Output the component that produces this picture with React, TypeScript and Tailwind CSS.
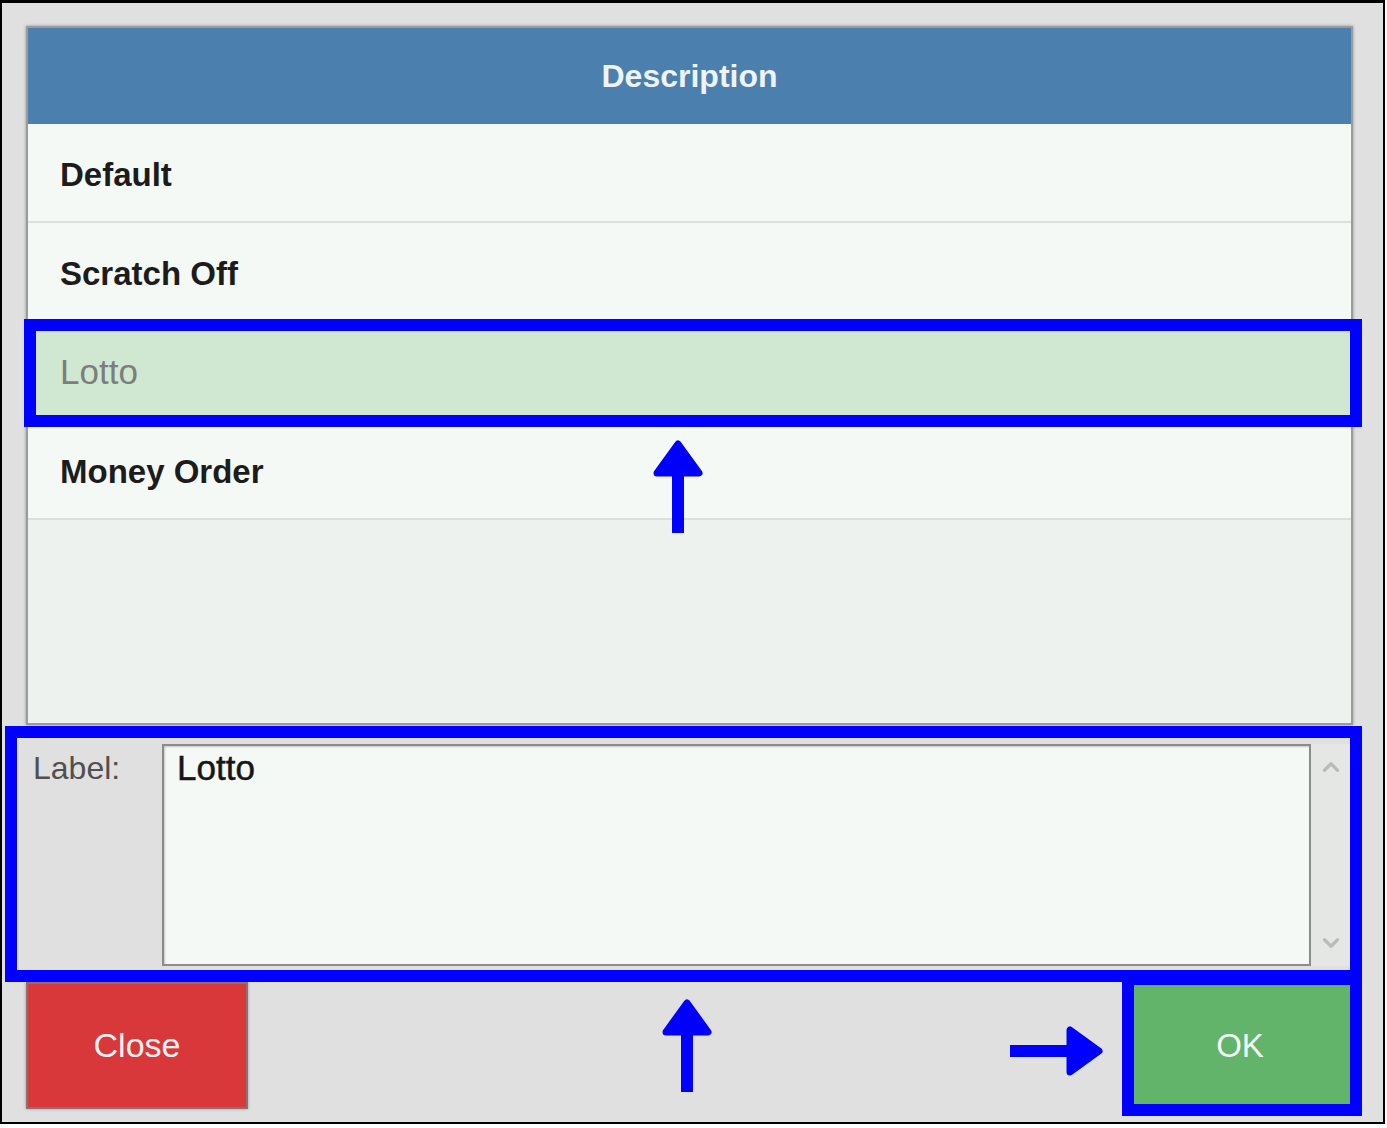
import { ChevronUp, ChevronDown } from 'lucide-react';

const rows = [
  { label: 'Default', selected: false },
  { label: 'Scratch Off', selected: false },
  { label: 'Lotto', selected: true },
  { label: 'Money Order', selected: false },
];

function UpArrow({ className }: { className: string }) {
  return (
    <svg viewBox="0 0 50 93" className={className} aria-hidden="true">
      <polygon points="25,4 46,33 4,33" fill="#0000ff" stroke="#0000ff" strokeWidth="7" strokeLinejoin="round" />
      <rect x="19" y="34" width="12" height="59" fill="#0000ff" />
    </svg>
  );
}

function RightArrow({ className }: { className: string }) {
  return (
    <svg viewBox="0 0 93 50" className={className} aria-hidden="true">
      <polygon points="89,25 60,4 60,46" fill="#0000ff" stroke="#0000ff" strokeWidth="7" strokeLinejoin="round" />
      <rect x="0" y="19" width="60" height="12" fill="#0000ff" />
    </svg>
  );
}

export default function App() {
  return (
    <div className="relative w-[1387px] h-[1128px] bg-white font-['Liberation_Sans',Arial,sans-serif]">
      <div className="w-[1385px] h-[1124px] border-2 border-t-[3px] border-black bg-[#e0e0e0] pl-[24px] pt-[23px] flex flex-col">
        {/* list */}
        <div className="w-[1327px] h-[699px] border-2 border-[#9b9b9b] shadow-[0_0_3px_rgba(0,0,0,0.35)] bg-[#eef2ef] flex flex-col">
          <div className="h-[96px] bg-[#4a7fae] flex items-center justify-center text-[32px] font-bold text-[#eef3f8]">
            Description
          </div>
          {rows.map(r => (
            <div
              key={r.label}
              className={`h-[99px] border-b-2 border-[#dedede] flex items-center pl-[32px] pt-[4px] ${r.selected ? 'bg-[#d0e8d1]' : 'bg-[#f5f9f6]'}`}
            >
              {r.selected ? (
                <span className="text-[35px] text-[#7b7f7b]">{r.label}</span>
              ) : (
                <span className="text-[33px] font-bold text-[#1c1c1c]">{r.label}</span>
              )}
            </div>
          ))}
        </div>

        {/* label editor */}
        <div className="mt-[19px] flex items-start">
          <div className="w-[136px] pl-[7px] pt-[8px] text-[32px] leading-none text-[#505050]">Label:</div>
          <div className="w-[1149px] h-[222px] border-2 border-[#8c8c8c] shadow-[inset_1px_1px_2px_rgba(0,0,0,0.2)] bg-[#f5f9f6] pl-[13px] pt-[4px]">
            <span className="text-[35px] leading-none text-[#161616] [-webkit-text-stroke:0.5px_#161616]">Lotto</span>
          </div>
          <div className="w-[40px] h-[222px] bg-[#e5e7e5] flex flex-col items-center justify-between py-[10px]">
            <ChevronUp className="w-[26px] h-[26px] text-[#babcba]" strokeWidth={3} />
            <ChevronDown className="w-[26px] h-[26px] text-[#babcba]" strokeWidth={3} />
          </div>
        </div>

        {/* buttons */}
        <div className="mt-[16px] w-[1325px] flex justify-between">
          <button className="w-[222px] h-[127px] bg-[#d9383a] border-2 border-[#8a7070] shadow-[0_0_3px_rgba(0,0,0,0.3)] text-[#fdf3f3] text-[34px]">
            Close
          </button>
          <button className="w-[222px] h-[127px] bg-[#62b46a] text-[#f3faf3] text-[33px]">
            OK
          </button>
        </div>
      </div>

      {/* annotations */}
      <div className="absolute left-[24px] top-[319px] w-[1338px] h-[108px] border-[12px] border-[#0000ff]" />
      <div className="absolute left-[5px] top-[726px] w-[1357px] h-[256px] border-[12px] border-[#0000ff]" />
      <div className="absolute left-[1122px] top-[973px] w-[240px] h-[143px] border-[12px] border-[#0000ff]" />
      <UpArrow className="absolute left-[653px] top-[440px] w-[50px] h-[93px]" />
      <UpArrow className="absolute left-[662px] top-[999px] w-[50px] h-[93px]" />
      <RightArrow className="absolute left-[1010px] top-[1026px] w-[93px] h-[50px]" />
    </div>
  );
}
